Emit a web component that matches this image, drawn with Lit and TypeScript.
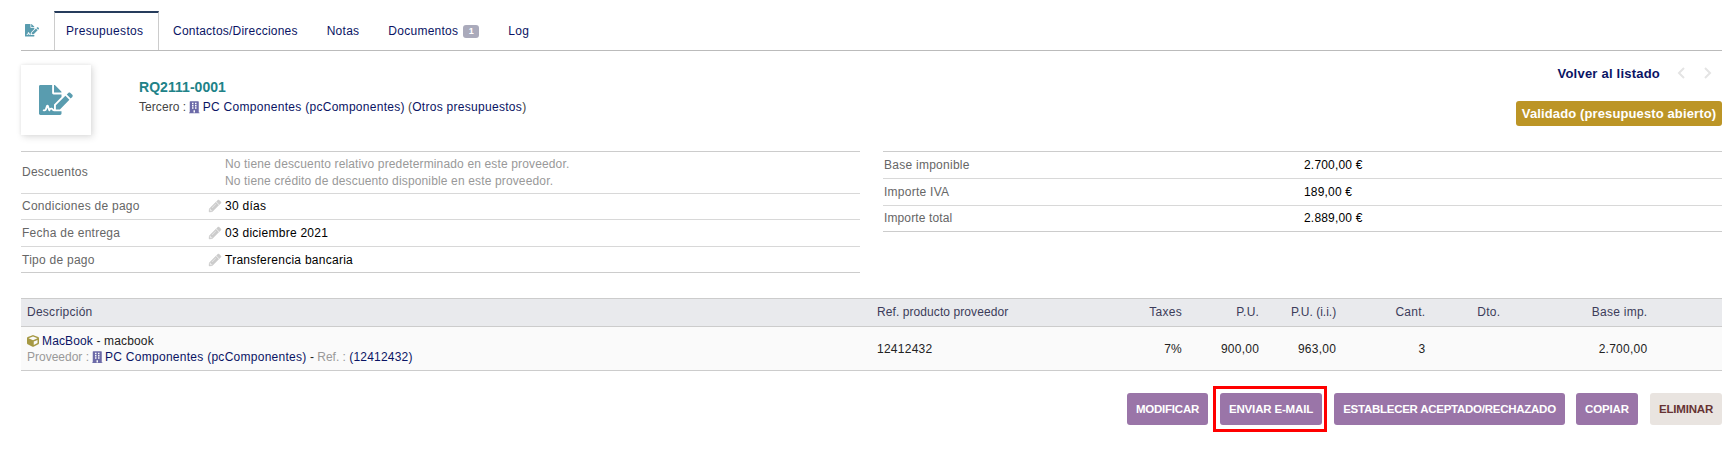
import { LitElement, html, css, svg } from "lit";

const ICONS = {
  signature: {
    box: "0 0 576 512",
    d: "M218.17 424.14c-2.95-5.92-8.09-6.52-10.17-6.52s-7.22.59-10.02 6.19l-7.67 15.34c-6.37 12.78-25.03 11.37-29.48-2.09L144 386.59l-10.61 31.88c-5.89 17.66-22.38 29.53-41 29.53H80c-8.84 0-16-7.16-16-16s7.16-16 16-16h12.39c4.83 0 9.11-3.08 10.64-7.66l18.19-54.64c3.3-9.81 12.44-16.41 22.78-16.41s19.48 6.59 22.77 16.41l13.88 41.64c19.75-16.19 54.06-9.7 66 14.16 1.89 3.78 5.49 5.95 9.36 6.26v-82.12l128-127.09V160H248c-13.2 0-24-10.8-24-24V0H24C10.7 0 0 10.7 0 24v464c0 13.3 10.7 24 24 24h336c13.3 0 24-10.7 24-24v-40l-128-.11c-16.12-.31-30.58-9.28-37.83-23.75zM384 121.9c0-6.3-2.5-12.4-7-16.9L279.1 7c-4.5-4.5-10.6-7-17-7H256v128h128v-6.1zm-96 225.06V416h68.99l161.68-162.78-67.88-67.88L288 346.96zm280.54-179.63l-31.87-31.87c-9.94-9.94-26.07-9.94-36.01 0l-27.25 27.25 67.88 67.88 27.25-27.25c9.95-9.94 9.95-26.07 0-36.01z",
  },
  building: {
    box: "0 0 448 512",
    d: "M436 480h-20V24c0-13.255-10.745-24-24-24H56C42.745 0 32 10.745 32 24v456H12c-6.627 0-12 5.373-12 12v20h448v-20c0-6.627-5.373-12-12-12zM128 64h64v64h-64zM256 64h64v64h-64zM128 160h64v64h-64zM256 160h64v64h-64zM128 256h64v64h-64zM256 256h64v64h-64zM192 384h64v96h-64z",
  },
  pencil: {
    box: "0 0 512 512",
    d: "M497.9 142.1l-46.1 46.1c-4.7 4.7-12.3 4.7-17 0l-111-111c-4.7-4.7-4.7-12.3 0-17l46.1-46.1c18.7-18.7 49.1-18.7 67.9 0l60.1 60.1c18.8 18.7 18.8 49.1 0 67.9zM284.2 99.8L21.6 362.4.4 483.9c-2.9 16.4 11.4 30.6 27.8 27.8l121.5-21.3 262.6-262.6c4.7-4.7 4.7-12.3 0-17l-111-111c-4.8-4.7-12.4-4.7-17.1 0zM124.1 339.9c-5.5-5.5-5.5-14.3 0-19.8l154-154c5.5-5.5 14.3-5.5 19.8 0s5.5 14.3 0 19.8l-154 154c-5.5 5.5-14.3 5.5-19.8 0zM88 424h48v36.3l-64.5 11.3-31.1-31.1L51.7 376H88v48z",
  },
  cube: {
    box: "0 0 512 512",
    d: "M239.1 6.3l-208 78c-18.7 7-31.1 25-31.1 45v225.1c0 18.2 10.3 34.8 26.5 42.9l208 104c13.5 6.8 29.4 6.8 42.9 0l208-104c16.3-8.1 26.5-24.8 26.5-42.9V129.3c0-20-12.4-37.9-31.1-44.9l-208-78C262 2.2 250 2.2 239.1 6.3zM256 68.4l192 72v1.1l-192 78-192-78v-1.1l192-72zm32 356V275.5l160-65v133.9l-160 80z",
  },
};

const icon = (name: keyof typeof ICONS, cls: string) => html`<svg class="icon ${cls}" viewBox=${ICONS[name].box}>
  ${svg`<path fill-rule="evenodd" d=${ICONS[name].d}></path>`}
</svg>`;

const chevron = (d: string) => html`<svg class="chev" viewBox="0 0 8 12"><path d=${d}></path></svg>`;

const TERMS = [
  ["Condiciones de pago", "30 días", ""],
  ["Fecha de entrega", "03 diciembre 2021", "tall"],
  ["Tipo de pago", "Transferencia bancaria", "low"],
];

const TOTALS = [
  ["Base imponible", "2.700,00 €", "tall"],
  ["Importe IVA", "189,00 €", "tall"],
  ["Importe total", "2.889,00 €", "last"],
];

class AppRoot extends LitElement {
  static styles = css`
    :host {
      display: block;
      box-sizing: border-box;
      height: 466px;
      padding: 11px 12px 0 21px;
      background: #fff;
      color: #000;
      font: 12px/17px "Liberation Sans", Arial, sans-serif;
      letter-spacing: 0.26px;
      white-space: nowrap;
    }
    .icon { display: block; flex: none; fill: currentColor; }
    .link { color: #0a1464; }

    .tabs { display: flex; height: 39px; border-bottom: 1px solid #bbb; }
    .tab {
      display: flex;
      align-items: center;
      padding-right: 29px;
      color: #0a1464;
    }
    .tab.mark { width: 33px; padding: 0 0 0 4px; box-sizing: border-box; color: #599caf; }
    .mark .icon { width: 14px; height: 12.5px; }
    .tab.active {
      box-sizing: border-box;
      width: 105px;
      margin-right: 14px;
      padding: 0 0 0 11px;
      border: 1px solid #ccc;
      border-top: 2px solid #263c5c;
      border-bottom: 0;
      letter-spacing: 0.34px;
    }
    .tab.first { letter-spacing: 0.22px; }
    .tab:not(.active) > span { padding-top: 1px; }
    .tab .badge {
      box-sizing: border-box;
      width: 16px;
      height: 13px;
      margin: 2px 0 0 5px;
      border-radius: 3px;
      background: #aaaabb;
      color: #fff;
      font: bold 9px/11px "Liberation Sans", Arial, sans-serif;
      text-align: center;
    }
    .tab:not(.active) > .badge { padding-top: 0; line-height: 13px; }

    .banner { display: flex; height: 100px; }
    .photo {
      display: flex;
      align-items: center;
      justify-content: center;
      box-sizing: border-box;
      width: 70px;
      height: 70px;
      margin: 14px 48px 0 0;
      background: #fff;
      box-shadow: 2px 2px 7px #ddd, 0 0 3px #e8e8e8;
      color: #599caf;
    }
    .photo .icon { width: 33.75px; height: 30px; }
    .who { flex: 1; padding-top: 27px; color: #444; }
    .ref { color: #208288; font-size: 14px; font-weight: bold; line-height: 18px; letter-spacing: 0.05px; }
    .third { display: flex; align-items: center; height: 17px; margin-top: 3px; }
    .third .label { letter-spacing: 0.06px; margin-right: 3px; }
    .wide { letter-spacing: 0.29px; }
    .bld { width: 10.5px; height: 12.5px; margin-right: 3px; color: #6c6aa8; }
    .paren { margin-left: 3px; letter-spacing: 0.29px; }
    .side { display: flex; flex-direction: column; align-items: flex-end; }
    .back { display: flex; align-items: center; margin: 14px 10px 0 0; height: 17px; font-size: 13px; font-weight: bold; letter-spacing: 0.22px; }
    .chev { width: 8px; height: 12px; margin-top: -1px; fill: none; stroke: #e4e4e4; stroke-width: 2; }
    .back .chev { margin-left: 17px; }
    .back .chev + .chev { margin-left: 19px; }
    .status {
      box-sizing: border-box;
      width: 206px;
      height: 25px;
      margin-top: 19px;
      border-radius: 3px;
      background: #bc9526;
      color: #fff;
      font-size: 13px;
      font-weight: bold;
      line-height: 25px;
      letter-spacing: 0.12px;
      text-align: center;
    }

    .facts { display: flex; justify-content: space-between; align-items: flex-start; height: 147px; }
    .card { width: 839px; border-top: 1px solid #ccc; }
    .row {
      display: flex;
      align-items: center;
      box-sizing: border-box;
      height: 26px;
      padding-left: 1px;
      border-bottom: 1px solid #d8d8d8;
    }
    .row:last-child { border-color: #ccc; }
    .row.tall { height: 27px; }
    .row.low { padding-top: 1px; }
    .row.double { height: 42px; }
    .row .name { width: 186px; color: #666; }
    .row .pencil { width: 12px; height: 12px; margin: -1px 4px 0 1px; color: #ccc; stroke: #ccc; stroke-width: 18px; overflow: visible; }
    .double .name { width: 203px; }
    .muted { color: #999; }
    .double .muted { letter-spacing: 0.145px; }
    .totals .name { width: 420px; }
    .totals .amount { letter-spacing: 0.19px; }
    .totals .last .name { letter-spacing: 0.12px; }

    .lines { border-top: 1px solid #ccc; border-bottom: 1px solid #ccc; }
    .cols {
      display: grid;
      grid-template-columns: 850px 200px 105px 77.2px 77px 89.2px 74.9px 147.2px;
      align-items: center;
      padding-left: 6px;
      text-align: right;
    }
    .cols > :nth-child(-n + 2) { text-align: left; }
    .head { height: 27px; border-bottom: 1px solid #ccc; background: #e9eaed; color: #3c3c5a; }
    .head > :nth-child(2) { letter-spacing: 0.08px; }
    .head > :nth-child(5) { letter-spacing: 0; }
    .item { box-sizing: border-box; height: 43px; padding-top: 1px; background: #fafafa; color: #222; }
    .part { display: flex; align-items: center; height: 16px; letter-spacing: 0; }
    .part .cube { width: 12px; height: 12px; margin-right: 3px; color: #a69944; }
    .part .name { letter-spacing: 0.14px; }
    .part .code { letter-spacing: 0.2px; }
    .part .bld { margin: 0 2.5px 0 3px; }
    .part .wide { letter-spacing: 0.27px; }

    .actions { display: flex; align-items: center; justify-content: flex-end; height: 46px; margin-top: 15px; }
    .btn {
      box-sizing: border-box;
      width: 81px;
      height: 32px;
      border-radius: 3px;
      background: #9a75a8;
      color: #fff;
      font-size: 11.5px;
      font-weight: bold;
      line-height: 32px;
      letter-spacing: -0.22px;
      text-align: center;
    }
    .btn.send { width: 102px; letter-spacing: -0.17px; }
    .btn.accept { width: 231px; margin: 0 11px 0 7px; letter-spacing: -0.26px; }
    .btn.copy { width: 62px; margin-right: 12px; letter-spacing: -0.12px; }
    .btn.remove { width: 72px; background: #e9e4e0; color: #633; letter-spacing: -0.17px; }
    .focus { box-sizing: border-box; height: 46px; margin-left: 5px; padding: 4px 2px 4px 4px; border: 3px solid #f00; }
  `;

  render() {
    return html`
      <nav class="tabs">
        <div class="tab mark">${icon("signature", "")}</div>
        <div class="tab active"><span>Presupuestos</span></div>
        <div class="tab first"><span>Contactos/Direcciones</span></div>
        <div class="tab"><span>Notas</span></div>
        <div class="tab"><span>Documentos</span><span class="badge">1</span></div>
        <div class="tab"><span>Log</span></div>
      </nav>
      <header class="banner">
        <div class="photo">${icon("signature", "")}</div>
        <div class="who">
          <div class="ref">RQ2111-0001</div>
          <div class="third">
            <span class="label">Tercero :</span>${icon("building", "bld")}
            <span class="link wide">PC Componentes (pcComponentes)</span>
            <span class="paren">(<span class="link">Otros presupuestos</span>)</span>
          </div>
        </div>
        <div class="side">
          <div class="back link">Volver al listado${chevron("M7 1L2 6l5 5")}${chevron("M1 1l5 5-5 5")}</div>
          <div class="status">Validado (presupuesto abierto)</div>
        </div>
      </header>
      <section class="facts">
        <div class="card">
          <div class="row double">
            <span class="name">Descuentos</span>
            <div class="muted">
              No tiene descuento relativo predeterminado en este proveedor.<br />No tiene crédito de descuento disponible en este proveedor.
            </div>
          </div>
          ${TERMS.map(([name, value, cls]) => html`<div class="row ${cls}"><span class="name">${name}</span>${icon("pencil", "pencil")}<span>${value}</span></div>`)}
        </div>
        <div class="card totals">
          ${TOTALS.map(([name, value, cls]) => html`<div class="row ${cls}"><span class="name">${name}</span><span class="amount">${value}</span></div>`)}
        </div>
      </section>
      <section class="lines">
        <div class="cols head">
          ${["Descripción", "Ref. producto proveedor", "Taxes", "P.U.", "P.U. (i.i.)", "Cant.", "Dto.", "Base imp."].map((t) => html`<span>${t}</span>`)}
        </div>
        <div class="cols item">
          <div>
            <div class="part">${icon("cube", "cube")}<span class="name"><span class="link">MacBook</span> - macbook</span></div>
            <div class="part">
              <span class="muted">Proveedor :</span>${icon("building", "bld")}
              <span><span class="link wide">PC Componentes (pcComponentes)</span> - <span class="muted">Ref. :</span> <span class="link code">(12412432)</span></span>
            </div>
          </div>
          ${["12412432", "7%", "900,00", "963,00", "3", "", "2.700,00"].map((t) => html`<span>${t}</span>`)}
        </div>
      </section>
      <div class="actions">
        <div class="btn">MODIFICAR</div>
        <div class="focus"><div class="btn send">ENVIAR E-MAIL</div></div>
        <div class="btn accept">ESTABLECER ACEPTADO/RECHAZADO</div>
        <div class="btn copy">COPIAR</div>
        <div class="btn remove">ELIMINAR</div>
      </div>
    `;
  }
}
customElements.define("app-root", AppRoot);
